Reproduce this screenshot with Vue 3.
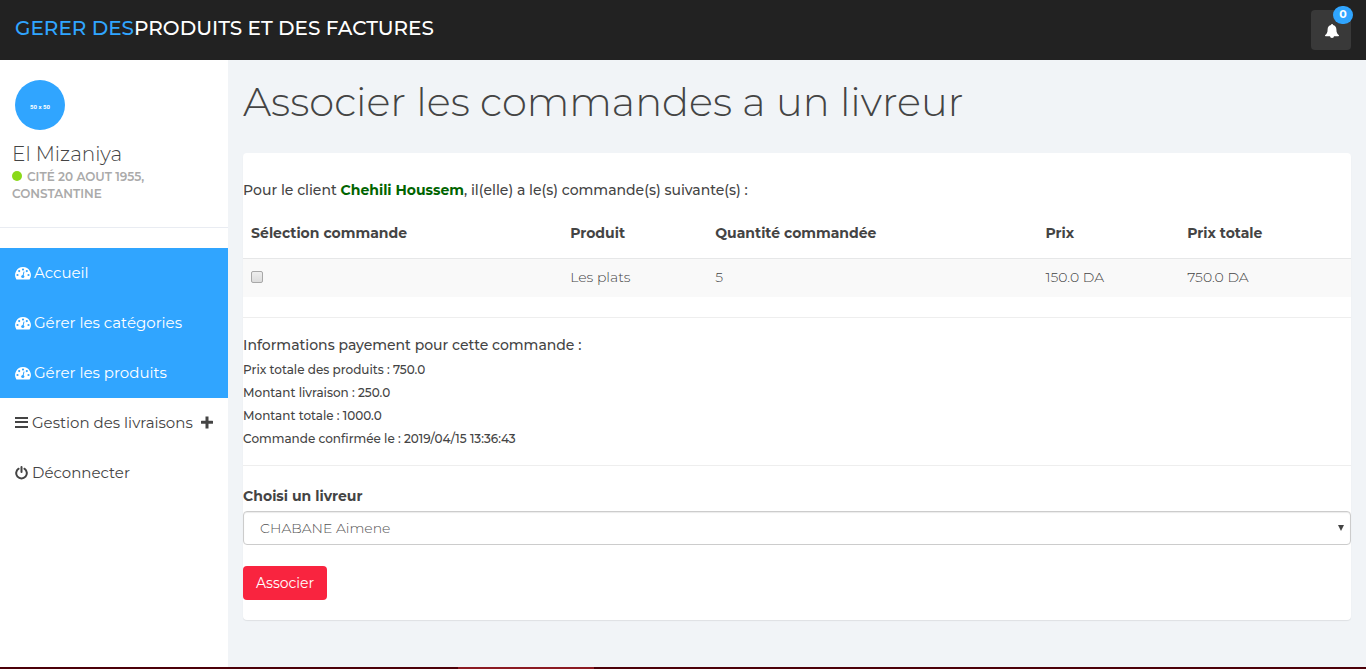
<script setup>
import { ref } from 'vue'

const dashboardLinks = ['Accueil', 'Gérer les catégories', 'Gérer les produits']
const payment = [
  'Prix totale des produits : 750.0',
  'Montant livraison : 250.0',
  'Montant totale : 1000.0',
  'Commande confirmée le : 2019/04/15 13:36:43',
]
const orders = [{ id: 1, product: 'Les plats', quantity: 5, price: '150.0 DA', total: '750.0 DA' }]
const selected = ref([])
const courier = ref('CHABANE Aimene')
</script>

<template>
  <div class="page">
    <header class="topbar">
      <a class="brand" href="#"><span>GERER DES</span>PRODUITS ET DES FACTURES</a>
      <button class="bell" type="button" aria-label="Notifications">
        <svg width="14" height="14" viewBox="0 0 14 14" aria-hidden="true">
          <path fill="#fff" d="M7 0c.6 0 1 .4 1 .9v.2c2 .4 3.400 2 3.400 4.300 0 3 .8 4.600 2.600 5.900 0 .6-.4 1-1 1H9a2 1.700 0 0 1-4 0H1c-.6 0-1-.4-1-1 1.800-1.300 2.600-2.900 2.600-5.900C2.600 3.100 4 1.500 6 1.100V.9C6 .4 6.400 0 7 0z" />
        </svg>
        <span class="badge">0</span>
      </button>
    </header>

    <div class="body">
      <aside class="sidebar">
        <div class="profile">
          <div class="avatar">50 x 50</div>
          <div class="name">El Mizaniya</div>
          <div class="status"><i class="dot"></i>CITÉ 20 AOUT 1955, CONSTANTINE</div>
        </div>
        <nav class="menu">
          <a v-for="link in dashboardLinks" :key="link" class="item active" href="#">
            <svg width="16" height="14" viewBox="0 0 16 14" aria-hidden="true">
              <path fill="#fff" d="M8 1a8 8 0 0 1 6.700 12.200c-.1.200-.4.300-.6.300H1.900c-.2 0-.5-.1-.6-.3A8 8 0 0 1 8 1z" />
              <g fill="#30a5ff">
                <circle cx="8" cy="3.500" r="1.100" />
                <circle cx="4.200" cy="5.100" r="1.100" />
                <circle cx="11.800" cy="5.100" r="1.100" />
                <circle cx="2.500" cy="9" r="1.100" />
                <circle cx="13.500" cy="9" r="1.100" />
                <circle cx="7.800" cy="10.500" r="1.600" />
              </g>
              <path d="M8 10l.9-4" stroke="#30a5ff" stroke-width="1" stroke-linecap="round" />
            </svg>
            <span>{{ link }}</span>
          </a>
          <a class="item" href="#">
            <svg width="13" height="14" viewBox="0 0 13 14" aria-hidden="true">
              <path fill="#444" d="M0 1h13v2H0zM0 5h13v2H0zM0 10h13v2H0z" />
            </svg>
            <span>Gestion des livraisons</span>
            <svg class="plus" width="12" height="14" viewBox="0 0 12 14" aria-hidden="true">
              <path fill="#444" d="M4.500 0.500h3v4.300H11.500q.5 0 .5.500v2q0 .5-.5.500H7.500v4.700h-3V7.800H.5q-.5 0-.5-.5v-2q0-.5.500-.5h4z" />
            </svg>
          </a>
          <a class="item" href="#">
            <svg width="13" height="14" viewBox="0 0 13 14" aria-hidden="true">
              <g fill="none" stroke="#444" stroke-width="2" stroke-linecap="round">
                <path d="M3.600 2.700a5.300 5.300 0 1 0 5.800 0M6.500 1v5" />
              </g>
            </svg>
            <span>Déconnecter</span>
          </a>
        </nav>
      </aside>

      <main class="main">
        <h1>Associer les commandes a un livreur</h1>
        <form class="panel" @submit.prevent>
          <p class="intro">Pour le client <strong>Chehili Houssem</strong>, il(elle) a le(s) commande(s) suivante(s) :</p>
          <table>
            <colgroup><col class="c1" /><col class="c2" /><col class="c3" /><col class="c4" /><col class="c5" /></colgroup>
            <thead>
              <tr>
                <th scope="col">Sélection commande</th>
                <th scope="col">Produit</th>
                <th scope="col">Quantité commandée</th>
                <th scope="col">Prix</th>
                <th scope="col">Prix totale</th>
              </tr>
            </thead>
            <tbody>
              <tr v-for="o in orders" :key="o.id">
                <td><input v-model="selected" type="checkbox" :value="o.id" :aria-label="o.product" /></td>
                <td>{{ o.product }}</td>
                <td>{{ o.quantity }}</td>
                <td>{{ o.price }}</td>
                <td>{{ o.total }}</td>
              </tr>
            </tbody>
          </table>
          <hr />
          <p class="info">Informations payement pour cette commande :</p>
          <ul class="payment">
            <li v-for="line in payment" :key="line">{{ line }}</li>
          </ul>
          <hr />
          <label for="courier">Choisi un livreur</label>
          <div class="select">
            <select id="courier" v-model="courier"><option>CHABANE Aimene</option></select>
            <svg width="6" height="6" viewBox="0 0 6 6" aria-hidden="true"><path fill="#444" d="M0 0h6L3 6z" /></svg>
          </div>
          <button class="submit" type="submit">Associer</button>
        </form>
      </main>
    </div>
    <footer class="strip"><i></i></footer>
  </div>
</template>

<style>
body {
  margin: 0;
  background: #f1f4f7;
}
</style>

<style scoped>
* {
  box-sizing: border-box;
}
.page {
  display: flex;
  flex-direction: column;
  min-height: 100vh;
  background: #f1f4f7;
  color: #444;
  font-family: Montserrat, Inter, "Open Sans", sans-serif;
  font-size: 14px;
  line-height: 20px;
}
a {
  color: inherit;
  text-decoration: none;
}
.topbar {
  display: flex;
  justify-content: space-between;
  align-items: flex-start;
  height: 60px;
  padding: 10px 15px;
  background: #222;
}
.brand {
  color: #fff;
  font-size: 20px;
  font-weight: 500;
  line-height: 36px;
}
.brand span {
  color: #30a5ff;
}
.bell {
  position: relative;
  display: flex;
  align-items: center;
  justify-content: center;
  width: 40px;
  height: 40px;
  padding: 2px 0 0 2px;
  border: 0;
  border-radius: 4px;
  background: #393939;
}
.badge {
  position: absolute;
  top: -4px;
  right: -2px;
  width: 20px;
  height: 18px;
  border-radius: 9px;
  background: #30a5ff;
  color: #fff;
  font: 700 11px/17px Montserrat, Inter, sans-serif;
}
.body {
  display: flex;
  flex: 1;
}
.sidebar {
  flex: none;
  width: 16.7%;
  background: #fff;
}
.profile {
  height: 168px;
  padding: 20px 12px 0;
  border-bottom: 1px solid #e9ecf2;
}
.avatar {
  width: 50px;
  height: 50px;
  margin: 0 3px 12px;
  border-radius: 50%;
  background: #30a5ff;
  color: #fff;
  font: 700 6px/53px Roboto, sans-serif;
  text-align: center;
}
.name {
  margin-bottom: 2px;
  font-size: 20px;
  font-weight: 300;
  line-height: 24px;
}
.status {
  max-width: 160px;
  color: #aaa;
  font-size: 12px;
  font-weight: 600;
  line-height: 17px;
}
.dot {
  display: inline-block;
  width: 10px;
  height: 10px;
  margin-right: 5px;
  border-radius: 50%;
  background: #8ad919;
}
.menu {
  margin-top: 20px;
}
.item {
  display: flex;
  align-items: center;
  gap: 4px;
  height: 50px;
  padding: 0 15px;
  font-size: 15px;
  white-space: nowrap;
}
.item svg {
  flex: none;
}
.item .plus {
  margin-left: 4px;
}
.active {
  gap: 3px;
  background: #30a5ff;
  color: #fff;
}
.main {
  flex: 1;
  min-width: 0;
  padding: 0 15px;
}
h1 {
  margin: 20px 0 29px;
  font-size: 40px;
  font-weight: 300;
  line-height: 44px;
}
.panel {
  padding: 27px 0 20px;
  border-radius: 4px;
  background: #fff;
  box-shadow: 0 1px 1px rgba(0, 0, 0, 0.08);
}
p {
  margin: 0;
  font-weight: 500;
}
.intro strong {
  color: #006400;
  font-weight: 700;
}
table {
  width: 100%;
  margin-top: 8px;
  border-collapse: collapse;
  table-layout: fixed;
}
.c1 { width: 28.8%; }
.c2 { width: 13.1%; }
.c3 { width: 29.8%; }
.c4 { width: 12.8%; }
.c5 { width: 15.5%; }
th,
td {
  padding: 0 8px;
  text-align: left;
}
th {
  height: 50px;
  border-bottom: 1px solid #e6e7e8;
  font-weight: 700;
}
td {
  height: 39px;
  padding-bottom: 2px;
  background: #f9f9f9;
  font-weight: 300;
}
td input {
  display: block;
  width: 12px;
  height: 12px;
  margin: 0;
  border: 1px solid #a8a8a8;
  border-radius: 2px;
  background: linear-gradient(#eee, #dcdcdc);
  appearance: none;
}
td input:checked {
  background: #30a5ff;
}
hr {
  height: 1px;
  margin: 20px 0 17px;
  border: 0;
  background: #eee;
}
.payment {
  margin: 3px 0 0;
  padding: 0;
  font-size: 12px;
  font-weight: 500;
  line-height: 23px;
  list-style: none;
}
.payment + hr {
  margin: 15px 0 20px;
}
label {
  display: block;
  margin-bottom: 5px;
  font-weight: 700;
}
.select {
  position: relative;
}
.select svg {
  position: absolute;
  top: 14px;
  right: 7px;
  pointer-events: none;
}
select {
  display: block;
  width: 100%;
  height: 34px;
  padding: 0 16px;
  border: 1px solid #ccc;
  border-radius: 4px;
  background: #fff;
  box-shadow: inset 0 1px 1px rgba(0, 0, 0, 0.08);
  color: #555;
  font: 300 14px/20px Montserrat, Inter, sans-serif;
  appearance: none;
}
.submit {
  display: block;
  height: 34px;
  margin-top: 21px;
  padding: 0 13px;
  border: 0;
  border-radius: 4px;
  background: #f9243f;
  color: #fff;
  font: 400 14px/20px Montserrat, Inter, sans-serif;
}
.strip {
  height: 2px;
  background: #4c0009;
}
.strip i {
  display: block;
  width: 10%;
  height: 2px;
  margin-left: 33.5%;
  background: #8b1a22;
}
</style>
